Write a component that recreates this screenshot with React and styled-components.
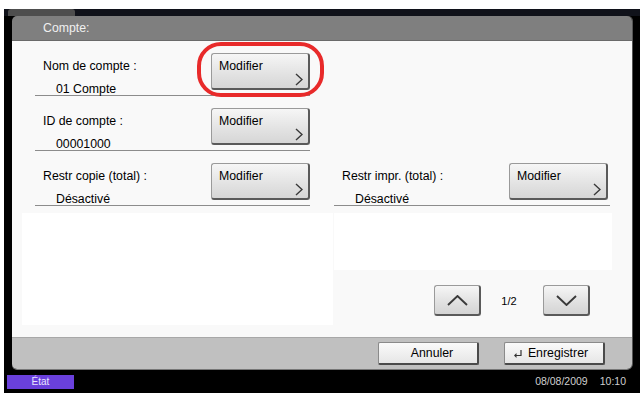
import React from "react";
import styled, { createGlobalStyle } from "styled-components";

const GlobalStyle = createGlobalStyle`
  html, body {
    margin: 0;
    padding: 0;
    background: #ffffff;
  }
  body {
    font-family: "Liberation Sans", Arial, sans-serif;
    font-size: 12.3px;
    color: #000;
  }
`;

const rows = [
  { label: "Nom de compte :", value: "01 Compte", highlight: true },
  { label: "ID de compte :", value: "00001000" },
  { label: "Restr copie (total) :", value: "Désactivé" },
];

function Chevron({ dir = "right", w = 8, h = 13, stroke = 1.4 }) {
  const paths = {
    right: `M1 1 L${w - 1} ${h / 2} L1 ${h - 1}`,
    up: `M1 ${h - 1} L${w / 2} 1 L${w - 1} ${h - 1}`,
    down: `M1 1 L${w / 2} ${h - 1} L${w - 1} 1`,
  };
  return (
    <svg width={w} height={h} viewBox={`0 0 ${w} ${h}`}>
      <path d={paths[dir]} fill="none" stroke="#3a3a3a" strokeWidth={stroke} />
    </svg>
  );
}

function ReturnIcon() {
  return (
    <svg width="10" height="10" viewBox="0 0 10 10">
      <path d="M8 1 V6.5 H2" fill="none" stroke="#333" strokeWidth="1.2" />
      <path d="M1 6.5 L3.5 4 V9 Z" fill="#333" />
    </svg>
  );
}

function SettingRow({ label, value, highlight }) {
  return (
    <Row>
      <RowText>
        <Label>{label}</Label>
        <Value>{value}</Value>
      </RowText>
      <ButtonSlot>
        <ModifyButton>
          <span>Modifier</span>
          <ArrowSpot>
            <Chevron />
          </ArrowSpot>
        </ModifyButton>
        {highlight && <Ring />}
      </ButtonSlot>
    </Row>
  );
}

export default function App() {
  return (
    <>
      <GlobalStyle />
      <Page>
        <Screen>
          <TopStrip>
            <TopTab />
          </TopStrip>
          <Panel>
            <Header>Compte:</Header>
            <Body>
              <Column>
                {rows.map((r) => (
                  <SettingRow key={r.label} {...r} />
                ))}
                <BlankBox $height={112} />
              </Column>
              <Column>
                <EmptyRow />
                <EmptyRow />
                <SettingRow label="Restr impr. (total) :" value="Désactivé" />
                <BlankBox $height={57} $wide />
                <Pager>
                  <PageButton>
                    <Chevron dir="up" w={21} h={11} stroke={1.9} />
                  </PageButton>
                  <PageNum>1/2</PageNum>
                  <PageButton>
                    <Chevron dir="down" w={21} h={11} stroke={1.9} />
                  </PageButton>
                </Pager>
              </Column>
            </Body>
            <Footer>
              <FooterButton>Annuler</FooterButton>
              <FooterButton>
                <ReturnSlot>
                  <ReturnIcon />
                </ReturnSlot>
                Enregistrer
              </FooterButton>
            </Footer>
          </Panel>
          <StatusBar>
            <StateTab>État</StateTab>
            <Clock>
              <span>08/08/2009</span>
              <span>10:10</span>
            </Clock>
          </StatusBar>
        </Screen>
      </Page>
    </>
  );
}

const Page = styled.div`
  width: 640px;
  height: 393px;
  padding: 9px 0 0 4px;
  box-sizing: border-box;
  background: #fff;
  overflow: hidden;
`;

const Screen = styled.div`
  height: 384px;
  background: #000;
  display: flex;
  flex-direction: column;
`;

const TopStrip = styled.div`
  height: 7px;
  background: #10121a;
  padding-left: 4px;
  display: flex;
`;

const TopTab = styled.div`
  width: 67px;
  background: #4e4e4e;
  border-radius: 3px 3px 0 0;
`;

const Panel = styled.div`
  margin: 0 8px 0 8px;
  width: 620px;
  height: 353px;
  display: flex;
  flex-direction: column;
  border-radius: 5px;
  overflow: hidden;
  box-shadow: 1px 0 0 #555, 0 1px 0 #777;
`;

const Header = styled.div`
  height: 24px;
  background: #7f7f7f;
  color: #f0f0f0;
  font-size: 12.3px;
  line-height: 25px;
  padding-left: 31px;
  border-bottom: 1px solid #6a6a6a;
`;

const Body = styled.div`
  flex: 1;
  background: #f9f9f9;
  display: flex;
  gap: 1px;
  padding: 0 0 0 10px;
`;

const Column = styled.div`
  display: flex;
  flex-direction: column;
  &:first-child {
    width: 311px;
  }
  &:last-child {
    width: 278px;
  }
`;

const Row = styled.div`
  height: 54px;
  margin-left: 13px;
  width: 275px;
  border-bottom: 1px solid #8c8c8c;
  display: flex;
  justify-content: space-between;
  ${Column}:last-child & {
    margin-left: 0;
    width: 276px;
  }
`;

const EmptyRow = styled.div`
  height: 55px;
`;

const RowText = styled.div`
  padding: 18px 0 0 8px;
  display: flex;
  flex-direction: column;
`;

const Label = styled.div`
  line-height: 14px;
`;

const Value = styled.div`
  line-height: 14px;
  margin-top: 9px;
  padding-left: 13px;
`;

const ButtonSlot = styled.div`
  position: relative;
  margin-top: 12px;
  height: 37px;
  ${Column}:last-child & {
    margin-right: 2px;
  }
`;

const ModifyButton = styled.div`
  position: relative;
  width: 99px;
  height: 37px;
  box-sizing: border-box;
  padding: 5px 0 0 7px;
  background: linear-gradient(#f6f6f6, #e2e2e2 60%, #d6d6d6);
  border: 1px solid #9a9a9a;
  border-right: 2px solid #5a5a5a;
  border-bottom: 2px solid #5a5a5a;
  border-radius: 3px;
  line-height: 14px;
`;

const ArrowSpot = styled.span`
  position: absolute;
  right: 5px;
  bottom: 2px;
  display: flex;
`;

const Ring = styled.div`
  position: absolute;
  left: -14px;
  top: -11px;
  width: 127px;
  height: 55px;
  box-sizing: border-box;
  border: 4px solid #e82a2a;
  border-radius: 24px;
  pointer-events: none;
`;

const BlankBox = styled.div`
  margin-top: 7px;
  height: ${(p) => p.$height}px;
  background: #fff;
  width: ${(p) => (p.$wide ? "278px" : "311px")};
`;

const Pager = styled.div`
  display: flex;
  align-items: center;
  margin: 15px 0 0 100px;
  height: 31px;
`;

const PageButton = styled.div`
  width: 47px;
  height: 31px;
  box-sizing: border-box;
  display: flex;
  align-items: center;
  justify-content: center;
  background: linear-gradient(#f6f6f6, #e0e0e0 60%, #d4d4d4);
  border: 1px solid #9a9a9a;
  border-right: 2px solid #5a5a5a;
  border-bottom: 2px solid #5a5a5a;
  border-radius: 3px;
`;

const PageNum = styled.div`
  width: 62px;
  text-align: center;
  font-size: 11px;
  padding-right: 6px;
  box-sizing: border-box;
`;

const Footer = styled.div`
  height: 31px;
  background: #c0c0c0;
  border-top: 1px solid #a8a8a8;
  display: flex;
  align-items: center;
  justify-content: flex-end;
  gap: 25px;
  padding-right: 27px;
`;

const FooterButton = styled.div`
  width: 101px;
  height: 23px;
  box-sizing: border-box;
  position: relative;
  display: flex;
  align-items: center;
  justify-content: center;
  background: linear-gradient(#fafafa, #e6e6e6);
  border: 1px solid #8a8a8a;
  border-right: 2px solid #4a4a4a;
  border-bottom: 2px solid #4a4a4a;
  border-radius: 2px;
  font-size: 12.3px;
  padding-left: 8px;
`;

const ReturnSlot = styled.span`
  position: absolute;
  left: 8px;
  top: 6px;
  display: flex;
`;

const StatusBar = styled.div`
  flex: 1;
  display: flex;
  align-items: center;
  justify-content: space-between;
  padding: 0 14px 0 3px;
`;

const StateTab = styled.div`
  width: 67px;
  height: 14px;
  background: #6a40dc;
  color: #e8e4ff;
  font-size: 10px;
  line-height: 14px;
  text-align: center;
  margin-top: 1px;
`;

const Clock = styled.div`
  color: #cfcfcf;
  font-size: 10.5px;
  display: flex;
  gap: 12px;
`;
